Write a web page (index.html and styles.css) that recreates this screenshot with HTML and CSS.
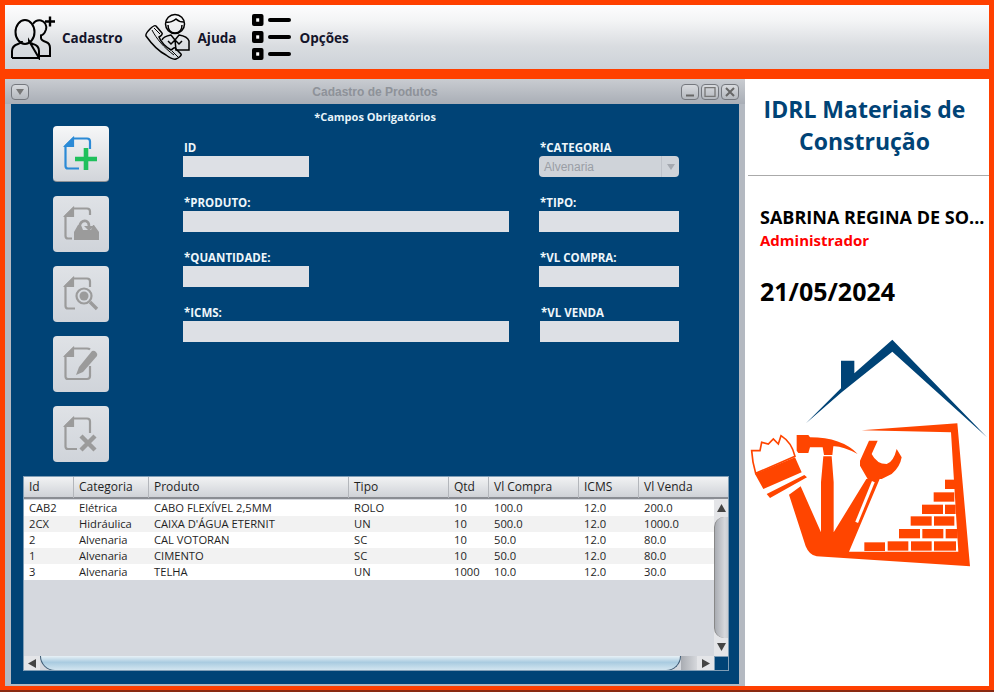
FILE: index.html
```html
<!DOCTYPE html>
<html>
<head>
  <title>Cadastro de Produtos</title>
  <link rel="stylesheet" href="styles.css">
</head>
<body>
  <div class="toolbar">
    <div class="menu-item m-cad">
      <svg class="ic" width="46" height="46" viewBox="0 0 46 46" fill="none" stroke="#000" stroke-width="2">
        <path d="M40 2.500v10M35 7.500h10" stroke-width="2.400"/>
        <path d="M23 10c2-3 5-4 8-3.500 4 1 6 5 5 9-1 3-3 6-6 6"/>
        <path d="M31 22v2c0 2 2 3 5 4 3 1 4 3 4 6v8H29"/>
        <ellipse cx="15" cy="18" rx="9.500" ry="12"/>
        <path d="M2 44v-7c0-4 3-6 6-7 3-1 4-2 4-3M19 27c0 1 1 2 4 3 4 1 6 3 6 7v7z"/>
        <path d="M2 44h27"/>
      </svg>
      <span>Cadastro</span>
    </div>
    <div class="menu-item m-aju">
      <svg class="ic" width="48" height="48" viewBox="0 0 48 48" fill="none" stroke="#000" stroke-width="1.500">
        <path d="M6 16c2-2 5-4 6-3l6 7c1 1-1 3-3 4 2 5 7 10 12 13 2-1 3-3 4-2l6 6c1 1-2 4-5 5-3 1-6-1-10-4C14 38 7 30 2 23c-1-2 2-5 4-7z"/>
        <path d="M8 17c4 8 12 18 22 25M10 15l6 6M28 38l6 6" stroke-width="1"/>
        <circle cx="31" cy="11" r="9.500"/>
        <path d="M22 9c3 1 8-1 10-3 2 2 6 3 8 3M24 12c0 5 3 8 7 8s7-3 7-8"/>
        <path d="M18 27c1-3 4-4 9-5l4 5 4-5c6 1 9 3 10 6v9H32l-1-10M31 27l-4 4-3-3M31 27l4 4 3-3"/>
      </svg>
      <span>Ajuda</span>
    </div>
    <div class="menu-item m-opc">
      <svg class="ic" width="40" height="48" viewBox="0 0 40 48">
        <rect x="1" y="1" width="11.500" height="12" rx="2"/>
        <rect x="1" y="18" width="11.500" height="12" rx="2"/>
        <rect x="1" y="35" width="11.500" height="12" rx="2"/>
        <rect class="dot" x="5.200" y="5.300" width="3" height="3.400"/>
        <rect class="dot" x="5.200" y="22.300" width="3" height="3.400"/>
        <rect class="dot" x="5.200" y="39.300" width="3" height="3.400"/>
        <rect x="17" y="5" width="23" height="4" rx="2"/>
        <rect x="17" y="22" width="23" height="4" rx="2"/>
        <rect x="17" y="39" width="23" height="4" rx="2"/>
      </svg>
      <span>Opções</span>
    </div>
  </div>

  <div class="main">
    <div class="window">
      <div class="titlebar">
        <div class="win-left">
          <div class="win-btn"><svg width="8" height="6" viewBox="0 0 8 6"><path d="M0 0h8L4 6z" fill="#777"/></svg></div>
        </div>
        <div class="win-title">Cadastro de Produtos</div>
        <div class="win-controls">
          <div class="win-btn"><svg width="10" height="10" viewBox="0 0 10 10"><path d="M1 7.500h8v2H1z" fill="#666"/></svg></div>
          <div class="win-btn"><svg width="12" height="10" viewBox="0 0 12 10"><path d="M1 .7h10v8.600H1z" fill="none" stroke="#777" stroke-width="1.300"/></svg></div>
          <div class="win-btn"><svg width="10" height="10" viewBox="0 0 10 10"><path d="M1 1l8 8M9 1l-8 8" stroke="#666" stroke-width="2"/></svg></div>
        </div>
      </div>

      <div class="content">
        <div class="required">*Campos Obrigatórios</div>
        <div class="work">
          <div class="tools">
            <div class="tool active">
              <svg width="36" height="36" viewBox="0 0 36 36" fill="none" stroke="#2b8ad6" stroke-width="2.200">
                <path d="M16 32.500H5q-2.500 0-2.500-2.500V10L10 2.500h14q3 0 3 3V13"/>
                <path d="M2.500 10L10 2.500V10z" fill="#2b8ad6"/>
                <path d="M23 12v22M12 23h22" stroke="#1fc05c" stroke-width="4.600"/>
              </svg>
            </div>
            <div class="tool">
              <svg width="36" height="36" viewBox="0 0 36 36" fill="none" stroke="#9b9b9b" stroke-width="2.200">
                <path d="M9 32.500H5q-2.500 0-2.500-2.500V10L10 2.500h14q3 0 3 3V9"/>
                <path d="M2.500 10L10 2.500V10z" fill="#9b9b9b"/>
                <path d="M11 34V26l4-7h3l2 5h8l2-5h1l5 7v8z" fill="#9b9b9b" stroke="none"/>
                <path d="M16 21q2-7 7-6 3 1 3 5" stroke-width="2.600"/>
                <path d="M21 20l5 5 5-5z" fill="#9b9b9b" stroke="none"/>
              </svg>
            </div>
            <div class="tool">
              <svg width="36" height="36" viewBox="0 0 36 36" fill="none" stroke="#9b9b9b" stroke-width="2.200">
                <path d="M12 32.500H5q-2.500 0-2.500-2.500V10L10 2.500h14q3 0 3 3V11"/>
                <path d="M2.500 10L10 2.500V10z" fill="#9b9b9b"/>
                <circle cx="21" cy="20" r="7.500"/>
                <circle cx="21" cy="20" r="4.500" fill="#9b9b9b" stroke="none"/>
                <path d="M27 26l7 7" stroke-width="3.400"/>
              </svg>
            </div>
            <div class="tool">
              <svg width="36" height="36" viewBox="0 0 36 36" fill="none" stroke="#9b9b9b" stroke-width="2.200">
                <path d="M27 20v10q0 3-3 3H5q-2.500 0-2.500-2.500V10L10 2.500h14q2 0 3 1"/>
                <path d="M2.500 10L10 2.500V10z" fill="#9b9b9b"/>
                <path d="M13 29l3-8L29 5q2-1 4 1t1 4L20 26z" fill="#9b9b9b" stroke="none"/>
              </svg>
            </div>
            <div class="tool">
              <svg width="36" height="36" viewBox="0 0 36 36" fill="none" stroke="#9b9b9b" stroke-width="2.200">
                <path d="M14 33H5q-2.500 0-2.500-2.500V10L10 2.500h14q3 0 3 3V17"/>
                <path d="M2.500 10L10 2.500V10z" fill="#9b9b9b"/>
                <path d="M18 20l14 14M32 20L18 34" stroke-width="4.400"/>
              </svg>
            </div>
          </div>

          <div class="form">
            <div class="field"><label>ID</label><div class="input short"></div></div>
            <div class="field"><label>*CATEGORIA</label>
              <div class="combo"><span>Alvenaria</span><div class="combo-arrow"><svg width="8" height="6" viewBox="0 0 8 6"><path d="M0 0h8L4 6z" fill="#a5a9b0"/></svg></div></div>
            </div>
            <div class="field"><label>*PRODUTO:</label><div class="input"></div></div>
            <div class="field"><label>*TIPO:</label><div class="input"></div></div>
            <div class="field"><label>*QUANTIDADE:</label><div class="input short"></div></div>
            <div class="field"><label>*VL COMPRA:</label><div class="input"></div></div>
            <div class="field"><label>*ICMS:</label><div class="input"></div></div>
            <div class="field nudge"><label>*VL VENDA</label><div class="input"></div></div>
          </div>
        </div>

        <div class="grid">
          <div class="row head">
            <div>Id</div><div>Categoria</div><div>Produto</div><div>Tipo</div><div>Qtd</div><div>Vl Compra</div><div>ICMS</div><div>Vl Venda</div>
          </div>
          <div class="rows">
            <div class="row"><div>CAB2</div><div>Elétrica</div><div>CABO FLEXÍVEL 2,5MM</div><div>ROLO</div><div>10</div><div>100.0</div><div>12.0</div><div>200.0</div></div>
            <div class="row"><div>2CX</div><div>Hidráulica</div><div>CAIXA D'ÁGUA ETERNIT</div><div>UN</div><div>10</div><div>500.0</div><div>12.0</div><div>1000.0</div></div>
            <div class="row"><div>2</div><div>Alvenaria</div><div>CAL VOTORAN</div><div>SC</div><div>10</div><div>50.0</div><div>12.0</div><div>80.0</div></div>
            <div class="row"><div>1</div><div>Alvenaria</div><div>CIMENTO</div><div>SC</div><div>10</div><div>50.0</div><div>12.0</div><div>80.0</div></div>
            <div class="row"><div>3</div><div>Alvenaria</div><div>TELHA</div><div>UN</div><div>1000</div><div>10.0</div><div>12.0</div><div>30.0</div></div>
          </div>
          <div class="vbar">
            <div class="sb-btn"><svg width="9" height="8" viewBox="0 0 9 8"><path d="M4.500 0L9 8H0z" fill="#444"/></svg></div>
            <div class="vthumb"></div>
            <div class="sb-btn"><svg width="9" height="8" viewBox="0 0 9 8"><path d="M0 0h9L4.500 8z" fill="#444"/></svg></div>
          </div>
          <div class="hbar">
            <div class="sb-btn"><svg width="8" height="9" viewBox="0 0 8 9"><path d="M8 0v9L0 4.500z" fill="#444"/></svg></div>
            <div class="hthumb"></div>
            <div class="htail"></div>
            <div class="sb-btn"><svg width="8" height="9" viewBox="0 0 8 9"><path d="M0 0v9l8-4.500z" fill="#444"/></svg></div>
          </div>
          <div class="corner"></div>
        </div>
      </div>
    </div>

    <div class="side">
      <div class="company">IDRL Materiais de Construção</div>
      <div class="user">SABRINA REGINA DE SO...</div>
      <div class="role">Administrador</div>
      <div class="date">21/05/2024</div>
      <svg class="logo" width="249" height="250" viewBox="0 0 747 750">
        <path class="navy" d="M183 283L288 178V95h40v38L442 32l284 293L442 68 290 190z"/>
        <g class="orange">
          <path d="M350 304l287-21 38 429-460-30q-22-3-33-30l-50-155 35-25 61 138V460l7-78h25l6 78v150l98-160h40L312 668h328l-22-358z"/>
          <path d="M155 318h35l5 7q95 0 143 50-48-25-73-23l-3 26h-25l-4-23h-38l-5 17h-30l-5-7z"/>
          <path d="M345 395l27-60h26l-18 40q15 30 45 30 20-5 30-45l15 25q-5 30-30 50l-30 15h-42l-23-40z"/>
          <path d="M30 435l120-50 20 45-115 50zM65 495l113-57 8 7-111 62z"/>
          <rect x="600" y="452" width="30" height="28"/>
          <rect x="566" y="490" width="62" height="28"/>
          <rect x="531" y="527" width="63" height="28"/>
          <rect x="600" y="527" width="32" height="28"/>
          <rect x="497" y="562" width="63" height="28"/>
          <rect x="567" y="562" width="61" height="28"/>
          <rect x="462" y="600" width="63" height="28"/>
          <rect x="532" y="600" width="63" height="28"/>
          <rect x="602" y="600" width="36" height="28"/>
          <rect x="358" y="640" width="62" height="26"/>
          <rect x="428" y="637" width="62" height="28"/>
          <rect x="498" y="637" width="62" height="28"/>
          <rect x="567" y="637" width="66" height="28"/>
        </g>
        <path d="M20 365l25 0 5-25 20 5 15-15 15 15 8-25q32 20 42 62L32 433q-10-33-12-68z" fill="#fff" stroke="#ff4500" stroke-width="5"/>
        <path d="M385 458l-50 122" stroke="#fff" stroke-width="9"/>
      </svg>
    </div>
  </div>
</body>
</html>
```

FILE: styles.css
```css
html, body {
  margin: 0;
  height: 692px;
  overflow: hidden;
}

body {
  box-sizing: border-box;
  padding: 5px 5px 0;
  background: #ff4000;
  border-bottom: 2px solid #8a2a12;
  font-family: "Open Sans", sans-serif;
}

.toolbar {
  height: 64px;
  display: flex;
  align-items: center;
  background: linear-gradient(#fdfdfe 0%, #f3f4f5 25%, #d9dce0 65%, #ccd2d8 100%);
}

.menu-item {
  display: flex;
  align-items: center;
  font-weight: bold;
  font-size: 13.500px;
  color: #14142a;
}

.menu-item span {
  padding-top: 1px;
}

.m-cad { margin-left: 5px; gap: 6px; }
.m-aju { margin-left: 21px; gap: 6px; }
.m-opc { margin-left: 14px; gap: 9px; }

.m-opc rect { fill: #000; }
.m-opc rect.dot { fill: #fff; }

.main {
  display: flex;
  margin-top: 10px;
  height: 607px;
}

.window {
  width: 740px;
  box-sizing: border-box;
  padding: 0 6px 2px;
  background: #b4b9c1;
  display: flex;
  flex-direction: column;
}

.titlebar {
  height: 25px;
  margin: 0 -6px;
  padding: 0 6px;
  display: flex;
  align-items: center;
  background: linear-gradient(#c9ccd1, #a9aeb6);
}

.win-left {
  width: 58px;
}

.win-title {
  flex: 1;
  text-align: center;
  font-family: "Liberation Sans", sans-serif;
  font-weight: bold;
  font-size: 12px;
  color: #8e9299;
}

.win-controls {
  display: flex;
  gap: 2px;
}

.win-btn {
  width: 18px;
  height: 16px;
  box-sizing: border-box;
  border: 1px solid #75787e;
  border-radius: 4px;
  background: linear-gradient(#d8dade, #b4b8be);
  display: flex;
  align-items: center;
  justify-content: center;
}

.content {
  flex: 1;
  background: #004376;
  display: flex;
  flex-direction: column;
}

.required {
  text-align: center;
  padding-top: 5px;
  height: 17px;
  font-weight: bold;
  font-size: 11px;
  line-height: 16px;
  color: #e8f4fa;
}

.work {
  display: flex;
  height: 350px;
}

.tools {
  margin-left: 42px;
  display: flex;
  flex-direction: column;
  gap: 14px;
}

.tool {
  width: 56px;
  height: 56px;
  box-sizing: border-box;
  border-radius: 4px;
  background: linear-gradient(#dfe2e6, #d0d4da);
  display: flex;
  align-items: center;
  justify-content: center;
}

.tool.active {
  background: linear-gradient(#f6f7f8, #d2d5da);
  border-bottom: 1px solid #8d9095;
}

.form {
  margin-left: 74px;
  padding-top: 13px;
  display: grid;
  grid-template-columns: 326px 140px;
  column-gap: 30px;
  grid-auto-rows: 55px;
}

.field label {
  display: block;
  height: 17px;
  padding-left: 1px;
  font-weight: bold;
  font-size: 11.500px;
  line-height: 17px;
  color: #eef6fa;
}

.input {
  height: 21px;
  background: #dde0e5;
}

.input.short {
  width: 126px;
}

.nudge {
  margin-left: 1px;
}

.combo {
  height: 21px;
  display: flex;
  border-radius: 4px;
  background: #cfd3d9;
  overflow: hidden;
  font-family: "Liberation Sans", sans-serif;
  font-size: 12px;
  line-height: 22px;
  color: #9a9ea5;
}

.combo span {
  flex: 1;
  padding-left: 5px;
}

.combo-arrow {
  width: 17px;
  border-left: 1px solid #bec2c9;
  display: flex;
  align-items: center;
  justify-content: center;
}

.grid {
  margin-left: 12px;
  width: 706px;
  display: grid;
  grid-template-columns: 691px 15px;
  grid-template-rows: 23px 157px 15px;
  background: #d5d8de;
  outline: 1px solid #7f9db5;
  outline-offset: -1px;
  color: #1f1f1f;
}

.row {
  display: grid;
  grid-template-columns: 50px 75px 200px 100px 40px 90px 60px 75px;
  padding-left: 1px;
  height: 16px;
  font-size: 11.200px;
  line-height: 16px;
}

.row > div {
  padding-left: 5px;
  white-space: nowrap;
}

.rows {
  padding-top: 1px;
}

.rows .row { background: #fff; }
.rows .row:nth-child(even) { background: #f2f2f2; }

.row.head {
  grid-column: 1 / 3;
  grid-template-columns: 50px 75px 200px 100px 40px 90px 60px 90px;
  height: 23px;
  box-sizing: border-box;
  border-bottom: 2px solid #8a8d93;
  background: linear-gradient(#f3f4f5, #cfd2d7);
  font-size: 12px;
  line-height: 22px;
}

.row.head > div {
  border-right: 1px solid #b3b6bb;
  box-sizing: border-box;
}

.vbar {
  display: flex;
  flex-direction: column;
  background: #e4e5e8;
}

.vbar .sb-btn {
  height: 18px;
}

.sb-btn {
  display: flex;
  align-items: center;
  justify-content: center;
  background: #e4e5e8;
}

.vthumb {
  flex: 1;
  border-radius: 10px 0 0 10px;
  border-left: 1px solid #888;
  background: linear-gradient(90deg, #a9acb2, #d6d8dc 70%, #c6c9ce);
}

.hbar {
  grid-column: 1;
  display: flex;
}

.hbar .sb-btn {
  width: 17px;
}

.hthumb {
  flex: 1;
  border-radius: 0 0 16px 16px;
  border: 1px solid #3d5a74;
  border-top: 0;
  background: linear-gradient(#e8f1f6, #a9cbe0 45%, #d2e5f0);
}

.htail {
  width: 16px;
  background: linear-gradient(90deg, #a9acb2, #d6d8dc);
}

.corner {
  background: #004376;
  outline: 1px solid #7f9db5;
  outline-offset: -1px;
}

.side {
  flex: 1;
  background: #fff;
  min-width: 0;
}

.company {
  padding: 14px 8px 16px 0;
  border-bottom: 1px solid #aaa;
  margin-left: 3px;
  height: 66px;
  text-align: center;
  font-weight: bold;
  font-size: 23px;
  line-height: 32px;
  color: #004376;
}

.user {
  margin: 29px 0 0 15px;
  font-weight: bold;
  font-size: 18px;
  line-height: 25px;
  white-space: nowrap;
  color: #000;
}

.role {
  margin-left: 15px;
  font-weight: bold;
  font-size: 15px;
  line-height: 20px;
  color: #f00;
}

.date {
  margin: 25px 0 0 15px;
  font-weight: bold;
  font-size: 25px;
  line-height: 32px;
  color: #000;
}

.logo {
  display: block;
  margin-top: 22px;
}

.navy { fill: #004376; }
.orange { fill: #ff4500; }
```
